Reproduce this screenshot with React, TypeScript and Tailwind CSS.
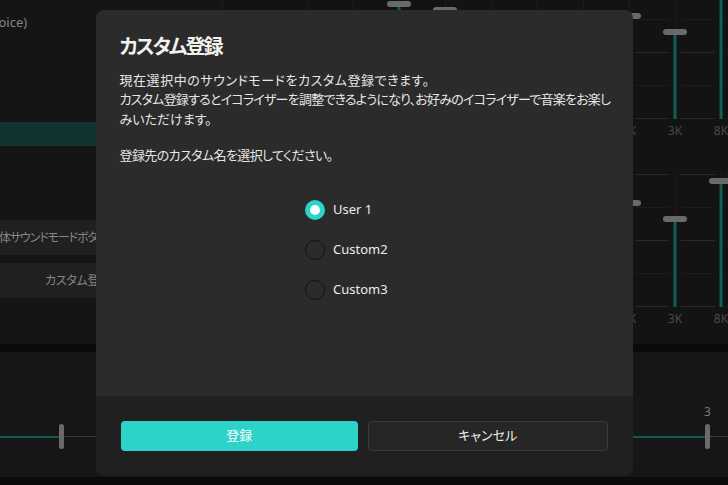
import React from "react";

type Col = { label: string; handle: number };

const upperCols: Col[] = [
  { label: "31", handle: 40 },
  { label: "63", handle: 60 },
  { label: "125", handle: 18 },
  { label: "250", handle: 24 },
  { label: "500", handle: 50 },
  { label: "700", handle: 70 },
  { label: "900", handle: 45 },
  { label: "1K", handle: 30 },
  { label: "3K", handle: 46 },
  { label: "8K", handle: -20 },
];

const lowerCols: Col[] = [
  { label: "31", handle: 60 },
  { label: "63", handle: 66 },
  { label: "125", handle: 50 },
  { label: "250", handle: 40 },
  { label: "500", handle: 70 },
  { label: "700", handle: 55 },
  { label: "900", handle: 35 },
  { label: "1K", handle: 29 },
  { label: "3K", handle: 45 },
  { label: "8K", handle: 7 },
];

function EqColumn({ col }: { col: Col }) {
  const fill = 133 - col.handle;
  return (
    <div className="w-[46px] shrink-0 flex flex-col items-center">
      <div className="relative w-full h-[133px] flex flex-col justify-between">
        <div className="h-px bg-[#2a2a2a]" />
        <div className="h-px bg-[#1c1c1c]" />
        <div className="h-px bg-[#2a2a2a]" />
        <div className="h-px bg-[#1c1c1c]" />
        <div className="h-px bg-[#2a2a2a]" />
        <div className="absolute top-0 bottom-0 left-1/2 -translate-x-1/2 w-[12px] bg-[#131313] flex justify-center">
          <div className="w-px h-full bg-[#1d1d1d]" />
        </div>
        <div
          className="absolute bottom-0 left-1/2 -translate-x-1/2 w-[3px] bg-[#0f5f56]"
          style={{ height: fill }}
        />
        <div
          className="absolute left-1/2 -translate-x-1/2 -translate-y-1/2 w-[24px] h-[6px] rounded-full bg-[#6a6a6a]"
          style={{ top: col.handle }}
        />
      </div>
      <div className="mt-[5px] text-[12px] leading-[14px] text-[#4a4a4a]">{col.label}</div>
    </div>
  );
}

function EqBlock({ cols }: { cols: Col[] }) {
  return (
    <div className="flex">
      <div className="w-[61px] shrink-0" />
      {cols.map((c, i) => (
        <EqColumn key={i} col={c} />
      ))}
    </div>
  );
}

function Radio({ label, checked }: { label: string; checked?: boolean }) {
  return (
    <div className="h-[40px] flex items-center gap-[8px]">
      {checked ? (
        <div className="w-[20px] h-[20px] rounded-full bg-[#2cd3c9] flex items-center justify-center">
          <div className="w-[10px] h-[10px] rounded-full bg-white" />
        </div>
      ) : (
        <div className="w-[20px] h-[20px] rounded-full border-[1.5px] border-[#111111]" />
      )}
      <span className="text-[13px] text-[#ececec]">{label}</span>
    </div>
  );
}

export default function App() {
  return (
    <div className="relative w-[728px] h-[485px] overflow-hidden bg-[#131313] font-['Noto_Sans','Noto_Sans_CJK_JP',sans-serif] [font-feature-settings:'palt']">
      {/* background app */}
      <div className="flex flex-col h-full">
        <div className="flex h-[344px]">
          {/* left panel */}
          <div className="w-[223px] shrink-0 bg-[#151515] border-r border-[#1e1e1e] flex flex-col">
            <div className="mt-[13px] -ml-[13px] text-[13px] leading-[18px] text-[#858585] whitespace-nowrap">
              (Voice)
            </div>
            <div className="mt-[91px] h-[24px] bg-[#133331]" />
            <div className="mt-[74px] h-[35px] bg-[#202020] flex items-center overflow-hidden">
              <span className="-ml-[12px] text-[12px] tracking-[-1.1px] text-[#858585] whitespace-nowrap">全体サウンドモードボタン</span>
            </div>
            <div className="mt-[8px] h-[35px] bg-[#202020] flex items-center overflow-hidden">
              <span className="ml-[45px] text-[12px] tracking-[-0.3px] text-[#858585] whitespace-nowrap">カスタム登録</span>
            </div>
          </div>
          {/* EQ panel */}
          <div className="flex-1 flex flex-col bg-[#131313]">
            <div className="-mt-[14px]">
              <EqBlock cols={upperCols} />
            </div>
            <div className="mt-[36px]">
              <EqBlock cols={lowerCols} />
            </div>
          </div>
        </div>
        <div className="h-[8px] bg-[#0b0b0b]" />
        <div className="h-[125px] bg-[#161616] flex">
          <div className="w-[250px] shrink-0 pt-[72px]">
            <div className="h-[25px] flex items-center">
              <div className="w-[59px] h-[2px] bg-[#0f5a52]" />
              <div className="w-[5px] h-[25px] rounded-full bg-[#6a6a6a]" />
              <div className="flex-1 h-px bg-[#3a3a3a]" />
            </div>
          </div>
          <div className="w-[270px] shrink-0" />
          <div className="w-[250px] shrink-0 pt-[53px] flex flex-col">
            <div className="ml-[180px] w-[15px] text-center text-[12px] leading-[14px] text-[#7a7a7a]">3</div>
            <div className="mt-[5px] h-[25px] flex items-center">
              <div className="w-[185px] h-[2px] bg-[#0f5a52]" />
              <div className="w-[5px] h-[25px] rounded-full bg-[#6a6a6a]" />
              <div className="flex-1 h-px bg-[#3a3a3a]" />
            </div>
          </div>
        </div>
        <div className="flex-1 bg-[#0b0b0b]" />
      </div>

      {/* dialog */}
      <div className="absolute inset-0 flex items-center justify-center">
        <div className="w-[537px] h-[466px] rounded-[8px] overflow-hidden flex flex-col">
          <div className="flex-1 bg-[#2b2b2b] px-[24px] pt-[23px]">
            <div className="text-[20px] leading-[28px] font-bold tracking-[-2px] text-[#f2f2ec]">カスタム登録</div>
            <div className="mt-[10px] text-[13px] leading-[19.5px] text-[#e6e6e6] whitespace-nowrap">
              <div className="tracking-[0.55px]">現在選択中のサウンドモードをカスタム登録できます。</div>
              <div className="tracking-[-0.78px]">カスタム登録するとイコライザーを調整できるようになり、お好みのイコライザーで音楽をお楽し</div>
              <div>みいただけます。</div>
              <div className="mt-[17px] tracking-[-0.6px]">登録先のカスタム名を選択してください。</div>
            </div>
            <div className="mt-[24px] mx-auto w-[118px] flex flex-col">
              <Radio label="User 1" checked />
              <Radio label="Custom2" />
              <Radio label="Custom3" />
            </div>
          </div>
          <div className="h-[80px] bg-[#202020] flex items-center gap-[10px] px-[25px]">
            <button className="flex-1 h-[30px] rounded-[4px] bg-[#2cd3c9] text-white text-[13px]">登録</button>
            <button className="flex-1 h-[30px] rounded-[4px] bg-[#262626] border border-[#3c3c3c] text-[#ececec] text-[13px]">
              キャンセル
            </button>
          </div>
        </div>
      </div>
    </div>
  );
}
